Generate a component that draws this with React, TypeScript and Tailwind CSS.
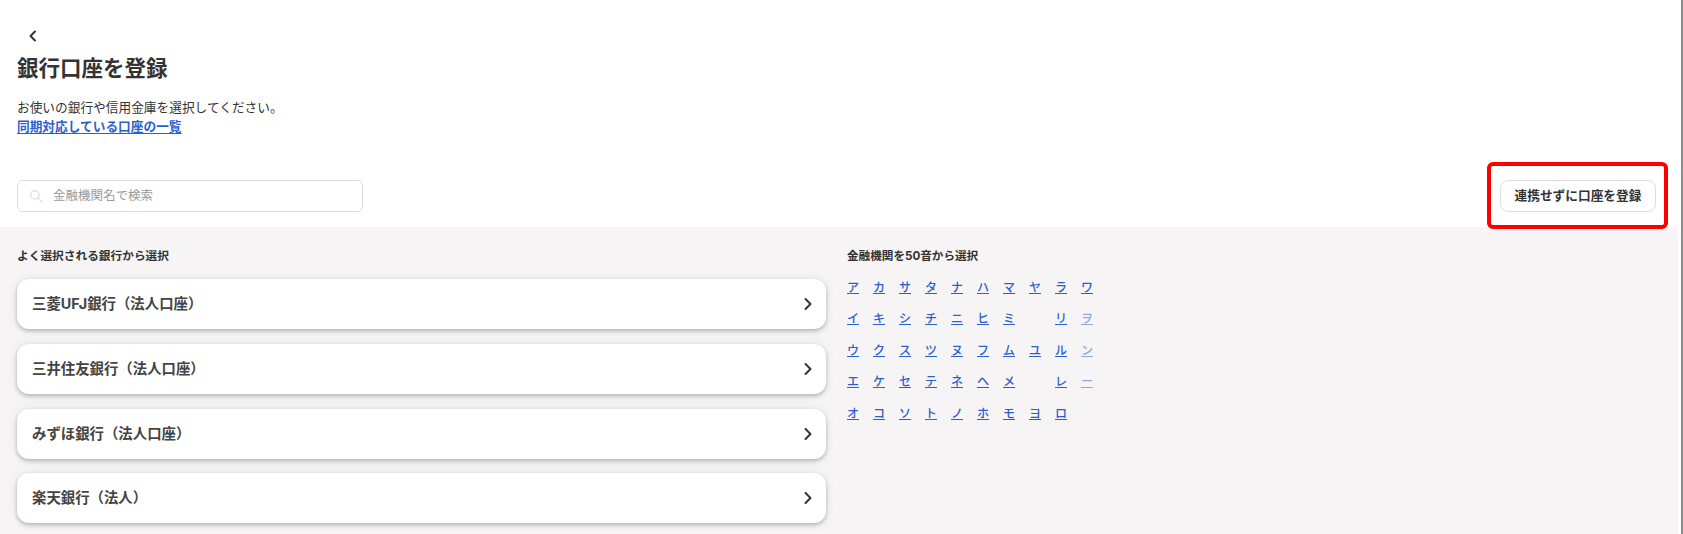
import React from "react";

const banks = ["三菱UFJ銀行（法人口座）", "三井住友銀行（法人口座）", "みずほ銀行（法人口座）", "楽天銀行（法人）"];
const kana: [string, boolean][][] = [
  [["ア", false], ["カ", false], ["サ", false], ["タ", false], ["ナ", false], ["ハ", false], ["マ", false], ["ヤ", false], ["ラ", false], ["ワ", false]],
  [["イ", false], ["キ", false], ["シ", false], ["チ", false], ["ニ", false], ["ヒ", false], ["ミ", false], ["", false], ["リ", false], ["ヲ", true]],
  [["ウ", false], ["ク", false], ["ス", false], ["ツ", false], ["ヌ", false], ["フ", false], ["ム", false], ["ユ", false], ["ル", false], ["ン", true]],
  [["エ", false], ["ケ", false], ["セ", false], ["テ", false], ["ネ", false], ["ヘ", false], ["メ", false], ["", false], ["レ", false], ["ー", true]],
  [["オ", false], ["コ", false], ["ソ", false], ["ト", false], ["ノ", false], ["ホ", false], ["モ", false], ["ヨ", false], ["ロ", false], ["", false]],
];

export default function App() {
  return (
    <div className="flex h-[534px] w-[1683px] overflow-hidden bg-white text-[#333] font-['Inter','Noto_Sans_CJK_JP',sans-serif]">
      <div className="relative w-[1678px] shrink-0">
        <header className="h-[227px] px-[17px]">
          <div className="flex h-[47px] items-end pl-[8px] pb-[3px]">
            <svg width="16" height="16" viewBox="0 0 16 16" fill="none" stroke="#333" strokeWidth="2" strokeLinecap="round" strokeLinejoin="round">
              <path d="M10 3.5 L5.5 8 L10 12.5" />
            </svg>
          </div>
          <h1 className="mt-[5px] text-[21.5px] leading-[32px] font-bold">銀行口座を登録</h1>
          <p className="mt-[14px] text-[12.7px] leading-[20px]">お使いの銀行や信用金庫を選択してください。</p>
          <a className="block text-[12.7px] leading-[18px] font-bold text-[#2b5fcf] underline underline-offset-2">同期対応している口座の一覧</a>
          <div className="mt-[44px] flex items-center justify-between">
            <div className="flex h-[32px] w-[346px] items-center rounded-[6px] border border-[#dcdcdc] bg-white pl-[11px]">
              <svg width="14" height="14" viewBox="0 0 14 14" fill="none" stroke="#e3e3e3" strokeWidth="1.6" strokeLinecap="round">
                <circle cx="5.8" cy="5.8" r="4.2" />
                <path d="M9 9 L13 13" />
              </svg>
              <span className="ml-[10px] text-[12.5px] text-[#999]">金融機関名で検索</span>
            </div>
            <div className="mr-[5px] flex h-[32px] w-[156px] items-center justify-center rounded-[8px] border border-[#dcdcdc] bg-white text-[12.7px] font-bold">
              連携せずに口座を登録
            </div>
          </div>
        </header>
        <main className="flex h-[307px] gap-[21px] bg-[#f6f4f5] px-[17px] pt-[21px]">
          <section className="w-[809px] shrink-0">
            <h2 className="text-[11.7px] leading-[16px] font-bold">よく選択される銀行から選択</h2>
            <ul className="mt-[15.3px] flex flex-col gap-[14.67px]">
              {banks.map((b) => (
                <li key={b} className="flex h-[50px] items-center justify-between rounded-[12px] bg-white pl-[15px] pr-[10px] shadow-[0_2px_4px_rgba(0,0,0,0.25),0_0_14px_rgba(0,0,0,0.06)]">
                  <span className="text-[14.4px] font-bold text-[#444]">{b}</span>
                  <svg width="16" height="16" viewBox="0 0 16 16" fill="none" stroke="#333" strokeWidth="2" strokeLinecap="round" strokeLinejoin="round">
                    <path d="M5.5 3 L10.5 8 L5.5 13" />
                  </svg>
                </li>
              ))}
            </ul>
          </section>
          <section>
            <h2 className="text-[11.6px] leading-[16px] font-bold">金融機関を50音から選択</h2>
            <div className="mt-[14.5px] flex flex-col gap-[13.5px]">
              {kana.map((row, i) => (
                <div key={i} className="flex h-[18px] gap-[14px]">
                  {row.map(([k, off], j) => (
                    <a key={j} className={off ? "w-[12px] text-[12px] leading-[18px] font-medium text-[#2b5fcf] underline underline-offset-1 opacity-50" : "w-[12px] text-[12px] leading-[18px] font-medium text-[#2b5fcf] underline underline-offset-1"}>{k}</a>
                  ))}
                </div>
              ))}
            </div>
          </section>
        </main>
        <div className="absolute left-[1487px] top-[162px] h-[67px] w-[181px] rounded-[6px] border-[4px] border-[#ff0000]" />
      </div>
      <div className="w-[3px] shrink-0 bg-white" />
      <div className="w-[2px] shrink-0 bg-[#8c8c8c]" />
    </div>
  );
}
